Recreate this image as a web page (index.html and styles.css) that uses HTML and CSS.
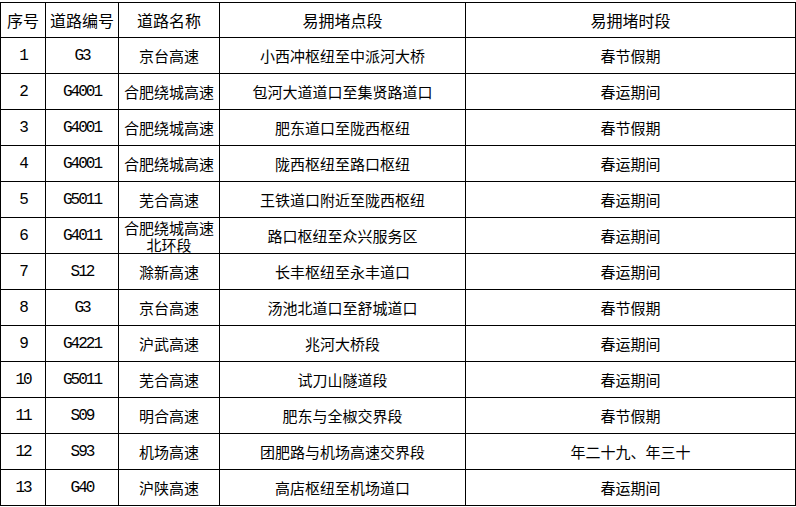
FILE: index.html
```html
<!DOCTYPE html>
<html lang="zh-CN">
<head>
<meta charset="utf-8">
<title>易拥堵路段</title>
<link rel="stylesheet" href="styles.css">
</head>
<body>
<table class="grid">
  <colgroup>
    <col class="c1"><col class="c2"><col class="c3"><col class="c4"><col class="c5">
  </colgroup>
  <thead>
    <tr class="head"><th>序号</th><th>道路编号</th><th>道路名称</th><th>易拥堵点段</th><th>易拥堵时段</th></tr>
  </thead>
  <tbody>
    <tr><td class="num">1</td><td class="num">G3</td><td>京台高速</td><td>小西冲枢纽至中派河大桥</td><td>春节假期</td></tr>
    <tr><td class="num">2</td><td class="num">G4001</td><td>合肥绕城高速</td><td>包河大道道口至集贤路道口</td><td>春运期间</td></tr>
    <tr><td class="num">3</td><td class="num">G4001</td><td>合肥绕城高速</td><td>肥东道口至陇西枢纽</td><td>春节假期</td></tr>
    <tr><td class="num">4</td><td class="num">G4001</td><td>合肥绕城高速</td><td>陇西枢纽至路口枢纽</td><td>春运期间</td></tr>
    <tr><td class="num">5</td><td class="num">G5011</td><td>芜合高速</td><td>王铁道口附近至陇西枢纽</td><td>春运期间</td></tr>
    <tr><td class="num">6</td><td class="num">G4011</td><td class="two"><span class="ln">合肥绕城高速</span><span class="ln">北环段</span></td><td>路口枢纽至众兴服务区</td><td>春运期间</td></tr>
    <tr><td class="num">7</td><td class="num">S12</td><td>滁新高速</td><td>长丰枢纽至永丰道口</td><td>春运期间</td></tr>
    <tr><td class="num">8</td><td class="num">G3</td><td>京台高速</td><td>汤池北道口至舒城道口</td><td>春节假期</td></tr>
    <tr><td class="num">9</td><td class="num">G4221</td><td>沪武高速</td><td>兆河大桥段</td><td>春运期间</td></tr>
    <tr><td class="num">10</td><td class="num">G5011</td><td>芜合高速</td><td>试刀山隧道段</td><td>春运期间</td></tr>
    <tr><td class="num">11</td><td class="num">S09</td><td>明合高速</td><td>肥东与全椒交界段</td><td>春节假期</td></tr>
    <tr><td class="num">12</td><td class="num">S93</td><td>机场高速</td><td>团肥路与机场高速交界段</td><td>年二十九、年三十</td></tr>
    <tr><td class="num">13</td><td class="num">G40</td><td>沪陕高速</td><td>高店枢纽至机场道口</td><td>春运期间</td></tr>
  </tbody>
</table>
</body>
</html>
```

FILE: styles.css
```css
html, body {
  margin: 0;
  padding: 0;
  background: #ffffff;
}
body {
  padding-top: 2px;
  font-family: "Noto Sans CJK SC", "Noto Sans", sans-serif;
  color: #000;
}
.grid {
  border-collapse: collapse;
  table-layout: fixed;
  width: 795px;
}
.c1 { width: 45px; }
.c2 { width: 73px; }
.c3 { width: 101px; }
.c4 { width: 246px; }
.c5 { width: 330px; }
.grid th, .grid td {
  border: 1px solid #000;
  padding: 0;
  text-align: center;
  vertical-align: middle;
  font-size: 15px;
  font-weight: normal;
  line-height: 18px;
  white-space: nowrap;
}
.grid th {
  font-size: 16px;
}
.head { height: 35px; }
.grid tbody tr { height: 36px; }
.grid td.num {
  font-family: "Liberation Mono", "DejaVu Sans Mono", monospace;
  font-size: 16px;
  letter-spacing: -2px;
}
.ln {
  display: block;
  line-height: 17px;
  height: 17px;
}
```
